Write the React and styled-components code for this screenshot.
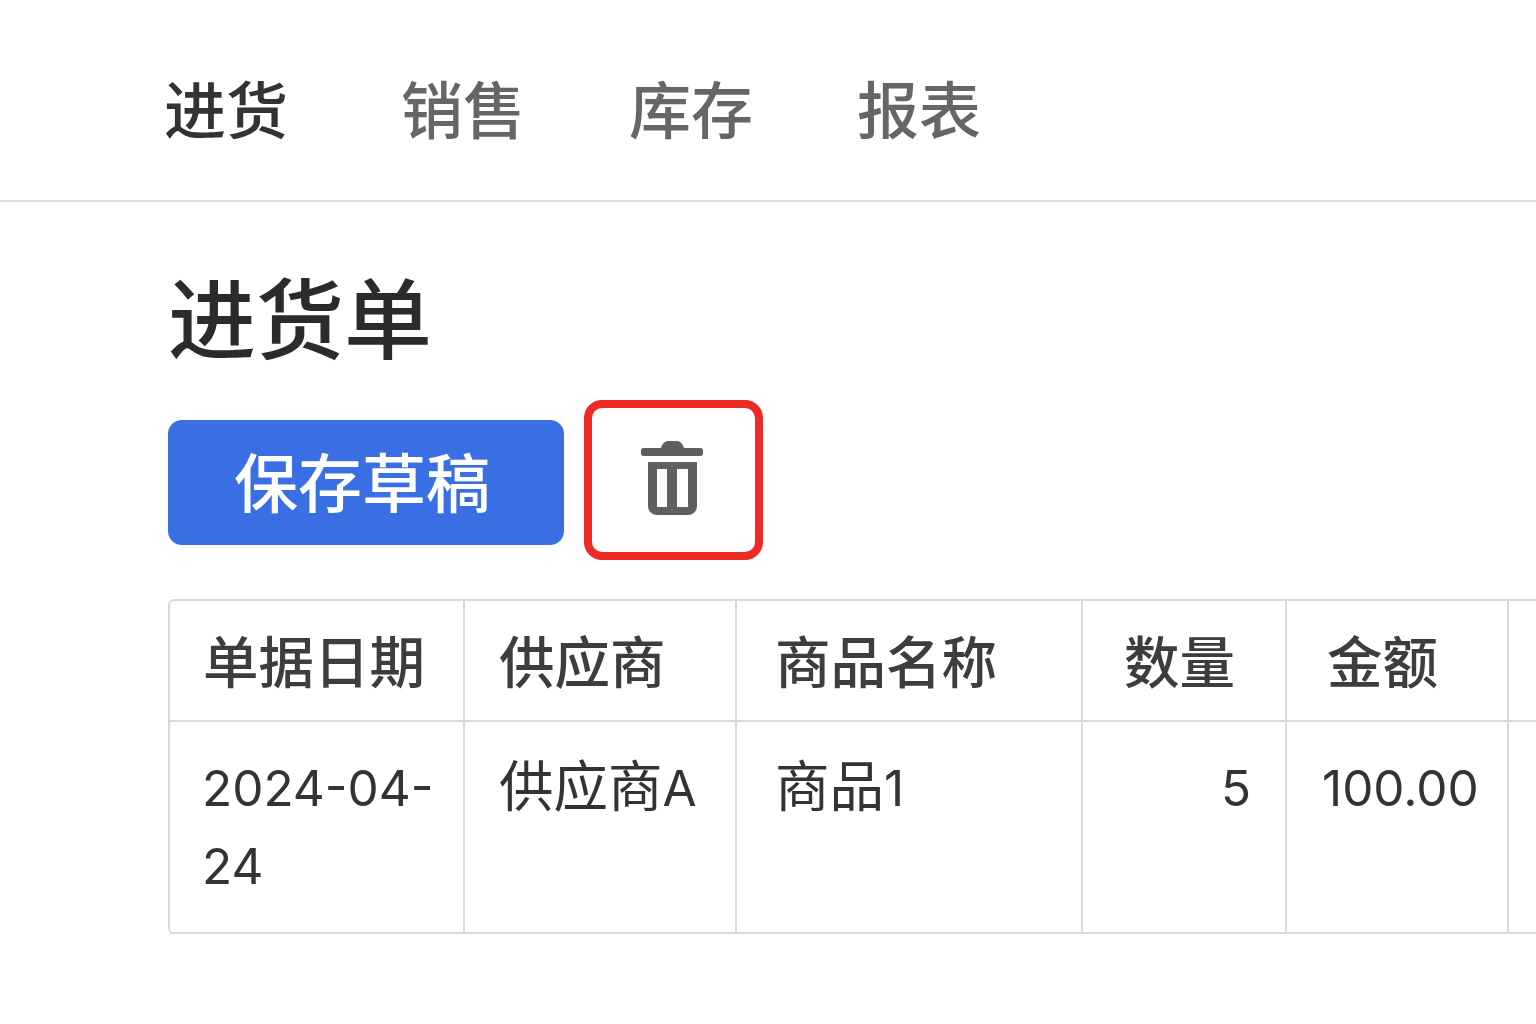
import styled, { createGlobalStyle } from 'styled-components';

const GlobalStyle = createGlobalStyle`
  html, body {
    margin: 0;
    padding: 0;
    background: #fff;
    overflow: hidden;
  }
  body {
    font-family: "Liberation Sans", "Noto Sans CJK SC", sans-serif;
    color: #333;
  }
`;

const Page = styled.div`
  width: 1536px;
  height: 1024px;
  overflow: hidden;
`;

const Nav = styled.nav`
  display: flex;
  align-items: center;
  gap: 104px;
  height: 202px;
  padding: 26px 0 0 164px;
  border-bottom: 2px solid #dedede;
  box-sizing: border-box;
`;

const NavItem = styled.a`
  font-size: 62px;
  line-height: 1;
  font-weight: 500;
  color: ${(p) => (p.$active ? '#333' : '#666')};
  margin-right: ${(p) => (p.$active ? 9 : 0)}px;
  white-space: nowrap;
`;

const Main = styled.main`
  padding: 70px 0 0 168px;
`;

const Title = styled.h1`
  margin: 0;
  font-size: 88px;
  line-height: 100px;
  font-weight: 500;
  color: #2b2b2b;
`;

const Toolbar = styled.div`
  display: flex;
  align-items: flex-start;
  gap: 20px;
  margin-top: 28px;
`;

const SaveButton = styled.button`
  width: 396px;
  height: 125px;
  margin-top: 20px;
  padding: 5px 8px 0 0;
  border: none;
  border-radius: 14px;
  background: #3a6fe4;
  color: #fff;
  font-family: inherit;
  font-size: 64px;
  font-weight: 500;
  line-height: 1;
`;

const TrashButton = styled.button`
  display: flex;
  align-items: center;
  justify-content: center;
  width: 179px;
  height: 160px;
  padding: 0 4px 4px 0;
  box-sizing: border-box;
  border: 8px solid #ee2a24;
  border-radius: 18px;
  background: #fff;
`;

const TableWrap = styled.div`
  width: 1400px;
  margin-top: 39px;
`;

const Table = styled.table`
  width: 1400px;
  table-layout: fixed;
  border-collapse: separate;
  border-spacing: 0;
  border-top: 2px solid #d9d9d9;
  border-left: 2px solid #d9d9d9;
  border-radius: 6px 0 0 6px;
`;

const Th = styled.th`
  height: 121px;
  padding: 0 0 3px ${(p) => p.$pad || 33}px;
  box-sizing: border-box;
  border-right: 2px solid #d9d9d9;
  border-bottom: 2px solid #d9d9d9;
  font-size: 55.5px;
  font-weight: 500;
  text-align: left;
  color: #3d3d3d;
  white-space: nowrap;
`;

const Td = styled.td`
  height: 212px;
  padding: 27px ${(p) => (p.$right ? 34 : 0)}px 0 ${(p) => p.$pad || 33}px;
  box-sizing: border-box;
  border-right: 2px solid #d9d9d9;
  border-bottom: 2px solid #d9d9d9;
  font-size: 54.5px;
  line-height: 78px;
  vertical-align: top;
  text-align: ${(p) => (p.$right ? 'right' : 'left')};
  color: #333;
  word-break: break-word;
`;

const Latin = styled.span`
  font-family: Inter, "Liberation Sans", sans-serif;
  font-size: 49.5px;
`;

const TrashIcon = () => (
  <svg width="62" height="74" viewBox="0 0 62 74" fill="#5f5f5f">
    <path d="M20 7C21 3 24 0 27 0H36C39 0 42 3 43 7H59.5C61 7 62 8 62 9.5V12.5C62 14 61 15 59.5 15H2.5C1 15 0 14 0 12.5V9.5C0 8 1 7 2.5 7Z" />
    <path
      fillRule="evenodd"
      d="M7 21H56V65C56 70 52 74 47 74H16C11 74 7 70 7 65ZM16 28V66H26V28ZM36 28V66H47V28Z"
    />
  </svg>
);

const navItems = ['进货', '销售', '库存', '报表'];

const columns = [
  { label: '单据日期', width: 295 },
  { label: '供应商', width: 272, pad: 34 },
  { label: '商品名称', width: 346, pad: 38 },
  { label: '数量', width: 204, pad: 41 },
  { label: '金额', width: 222, pad: 40 },
  { label: '', width: 60 },
];

export default function App() {
  return (
    <Page>
      <GlobalStyle />
      <Nav>
        {navItems.map((item, i) => (
          <NavItem key={item} $active={i === 0}>
            {item}
          </NavItem>
        ))}
      </Nav>
      <Main>
        <Title>进货单</Title>
        <Toolbar>
          <SaveButton>保存草稿</SaveButton>
          <TrashButton aria-label="删除">
            <TrashIcon />
          </TrashButton>
        </Toolbar>
        <TableWrap>
          <Table>
            <colgroup>
              {columns.map((c, i) => (
                <col key={i} style={{ width: c.width }} />
              ))}
            </colgroup>
            <thead>
              <tr>
                {columns.map((c, i) => (
                  <Th key={i} $pad={c.pad}>
                    {c.label}
                  </Th>
                ))}
              </tr>
            </thead>
            <tbody>
              <tr>
                <Td $pad={32}><Latin>2024-04-24</Latin></Td>
                <Td $pad={34}>供应商<Latin>A</Latin></Td>
                <Td $pad={38}>商品<Latin>1</Latin></Td>
                <Td $right><Latin>5</Latin></Td>
                <Td $pad={35}><Latin>100.00</Latin></Td>
                <Td />
              </tr>
            </tbody>
          </Table>
        </TableWrap>
      </Main>
    </Page>
  );
}
